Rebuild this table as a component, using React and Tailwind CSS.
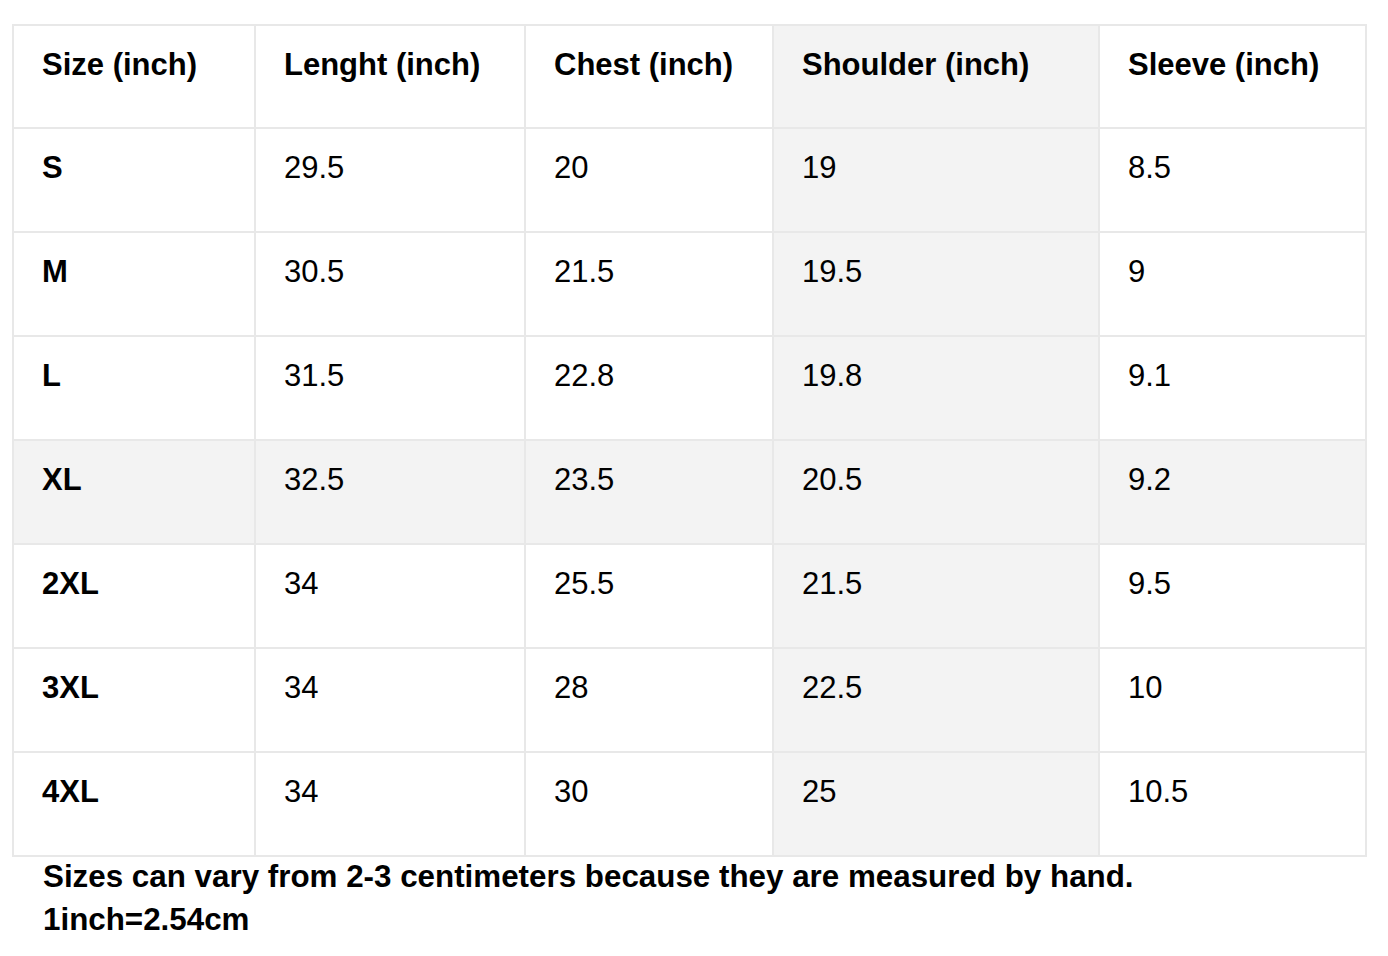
import React from "react";

const headers = ["Size (inch)", "Lenght (inch)", "Chest (inch)", "Shoulder (inch)", "Sleeve (inch)"];

const rows = [
    ["S", "29.5", "20", "19", "8.5"],
    ["M", "30.5", "21.5", "19.5", "9"],
    ["L", "31.5", "22.8", "19.8", "9.1"],
    ["XL", "32.5", "23.5", "20.5", "9.2"],
    ["2XL", "34", "25.5", "21.5", "9.5"],
    ["3XL", "34", "28", "22.5", "10"],
    ["4XL", "34", "30", "25", "10.5"],
];

// highlighted column / row, as in the original sheet
const SHADED_COL = 3;
const SHADED_ROW = 3;

export default function App() {
    return (
        <div
            className="min-h-[956px] w-[1388px] bg-white pt-[24px] pl-[12px] text-black"
            style={{ fontFamily: '"Liberation Sans", Arial, sans-serif' }}
        >
            <table className="table-fixed border-collapse w-[1353px] text-[31px] leading-[34px]">
                <colgroup>
                    <col className="w-[242px]" />
                    <col className="w-[270px]" />
                    <col className="w-[248px]" />
                    <col className="w-[326px]" />
                    <col className="w-[267px]" />
                </colgroup>
                <thead>
                    <tr className="h-[103px]">
                        {headers.map((h, i) => (
                            <th
                                key={h}
                                className={`border-2 border-[#e8e8e8] align-top text-left font-bold pt-[22px] pl-[28px] ${
                                    i === SHADED_COL ? "bg-[#f3f3f3]" : "bg-white"
                                }`}
                            >
                                {h}
                            </th>
                        ))}
                    </tr>
                </thead>
                <tbody>
                    {rows.map((row, r) => (
                        <tr key={row[0]} className="h-[104px]">
                            {row.map((cell, i) => (
                                <td
                                    key={i}
                                    className={`border-2 border-[#e8e8e8] align-top text-left pt-[22px] pl-[28px] ${
                                        i === 0 ? "font-bold" : "font-normal"
                                    } ${
                                        i === SHADED_COL || r === SHADED_ROW ? "bg-[#f3f3f3]" : "bg-white"
                                    }`}
                                >
                                    {cell}
                                </td>
                            ))}
                        </tr>
                    ))}
                </tbody>
            </table>
            <div className="pl-[31px] pt-[2px] text-[31.35px] font-bold leading-[36px]">
                <div>Sizes can vary from 2-3 centimeters because they are measured by hand.</div>
                <div className="mt-[7px]">1inch=2.54cm</div>
            </div>
        </div>
    );
}
